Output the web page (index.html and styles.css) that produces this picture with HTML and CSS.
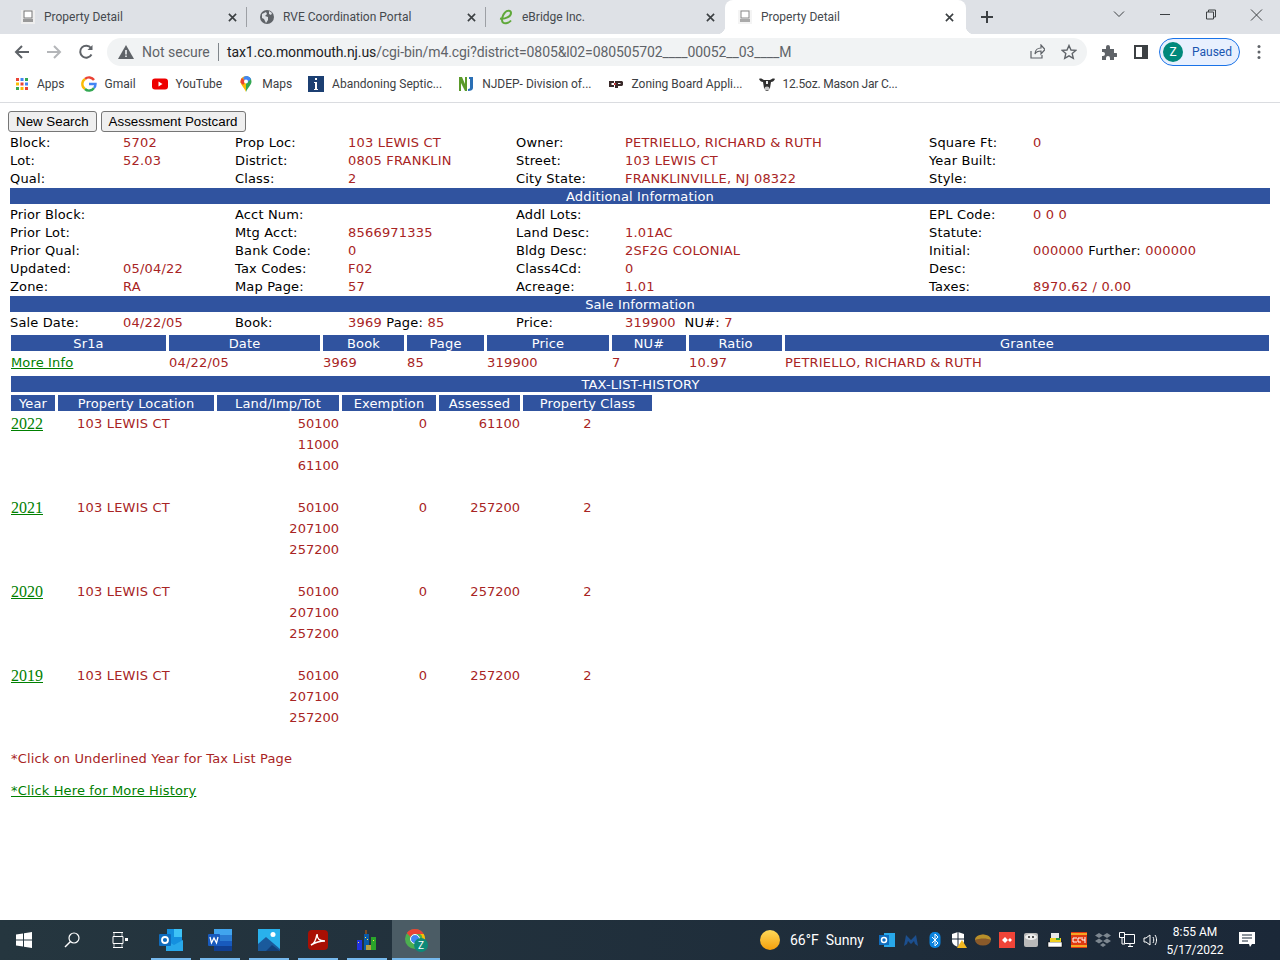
FILE: index.html

```html
<!DOCTYPE html>
<html lang="en">
<head>
    <meta charset="UTF-8">
    <title>Property Detail</title>
    <link rel="stylesheet" href="styles.css">
</head>
<body>
    <!-- browser frame -->
    <div class="tabs">
        <div class="tab">
            <svg class="favicon" viewBox="0 0 16 16"><rect x="1" y="1" width="14" height="14" fill="#eee"/><rect x="4" y="2" width="8" height="7" fill="#fff" stroke="#777"/><rect x="3" y="10" width="10" height="3" fill="#999"/></svg>
            <span class="tab-title">Property Detail</span>
            <svg class="tab-x" viewBox="0 0 10 10"><path d="M1 1l8 8M9 1l-8 8"/></svg>
        </div>
        <span class="tab-sep"></span>
        <div class="tab">
            <svg class="favicon" viewBox="0 0 16 16"><circle cx="8" cy="8" r="7" fill="#5f6368"/><path d="M3 5l4-2 1 2-2 2 3 1 0 3-2 3-2-4-2-1zM10 2l3 2-1 2-2-1z" fill="#dee1e6"/></svg>
            <span class="tab-title">RVE Coordination Portal</span>
            <svg class="tab-x" viewBox="0 0 10 10"><path d="M1 1l8 8M9 1l-8 8"/></svg>
        </div>
        <span class="tab-sep"></span>
        <div class="tab tab-last">
            <svg class="favicon" viewBox="0 0 16 16"><path d="M2 9.500c5 1 11-2 11-5.500 0-3-4-3-6-.5-3 3-4 8-2 10 2 1.500 6 .5 8-2" fill="none" stroke="#5fa83a" stroke-width="2"/></svg>
            <span class="tab-title">eBridge Inc.</span>
            <svg class="tab-x" viewBox="0 0 10 10"><path d="M1 1l8 8M9 1l-8 8"/></svg>
        </div>
        <div class="tab tab-active">
            <svg class="favicon" viewBox="0 0 16 16"><rect x="1" y="1" width="14" height="14" fill="#f4f4f4"/><rect x="4" y="2" width="8" height="7" fill="#fff" stroke="#888"/><rect x="3" y="10" width="10" height="3" fill="#aaa"/></svg>
            <span class="tab-title">Property Detail</span>
            <svg class="tab-x" viewBox="0 0 10 10"><path d="M1 1l8 8M9 1l-8 8"/></svg>
        </div>
        <svg class="new-tab" viewBox="0 0 12 12"><path d="M6 0v12M0 6h12"/></svg>
        <div class="win-btns">
            <svg class="win-btn" viewBox="0 0 46 12"><path d="M18 3l5 5 5-5"/></svg>
            <svg class="win-btn" viewBox="0 0 46 12"><path d="M18 6h10"/></svg>
            <svg class="win-btn" viewBox="0 0 46 12"><path d="M18.500 3.500h7v7h-7zM20.500 3.500v-2h7v7h-2"/></svg>
            <svg class="win-btn" viewBox="0 0 46 12"><path d="M17 1l11 11M28 1l-11 11"/></svg>
        </div>
    </div>

    <div class="toolbar">
        <svg class="tool-icon" viewBox="0 0 16 16"><path d="M15 8H2M8 2L2 8l6 6" fill="none" stroke="#5f6368" stroke-width="2"/></svg>
        <svg class="tool-icon" viewBox="0 0 16 16"><path d="M1 8h13M8 2l6 6-6 6" fill="none" stroke="#b4b6b9" stroke-width="2"/></svg>
        <svg class="tool-icon" viewBox="0 0 16 16"><path d="M13.500 10.500A6 6 0 1 1 13 4" fill="none" stroke="#5f6368" stroke-width="2"/><path d="M14.500 1v5h-5z" fill="#5f6368"/></svg>
        <div class="omnibox">
            <svg class="warn" viewBox="0 0 16 14"><path d="M8 0l8 14H0z" fill="#5f6368"/><path d="M7.200 5h1.600v4.500H7.200zM7.200 10.500h1.600V12H7.200z" fill="#f1f3f4"/></svg>
            <span class="not-secure">Not secure</span>
            <span class="omni-line"></span>
            <span class="url">tax1.co.monmouth.nj.us<span class="url-dim">/cgi-bin/m4.cgi?district=0805&amp;l02=080505702____00052__03____M</span></span>
            <svg class="omni-icon" viewBox="0 0 16 16"><path d="M2 7v7h11v-3M6 10c0-4 3-6 6-6V1l4 4.500L12 10V7c-3 0-5 1-6 3z" fill="none" stroke="#5f6368" stroke-width="1.200"/></svg>
            <svg class="omni-icon" viewBox="0 0 16 16"><path d="M8 1.500l2 4.500 4.800.4-3.600 3.200 1.100 4.700L8 11.800 3.700 14.300l1.100-4.700L1.200 6.400 6 6z" fill="none" stroke="#5f6368" stroke-width="1.400"/></svg>
        </div>
        <svg class="ext-icon" viewBox="0 0 16 16"><path d="M1 5h4V3a2 2 0 0 1 4 0v2h4v4h2a2 2 0 0 1 0 4h-2v3H9v-2a2 2 0 0 0-4 0v2H1v-4h1a2 2 0 0 0 0-4H1z" fill="#5f6368"/></svg>
        <svg class="panel-icon" viewBox="0 0 14 14"><rect x="1" y="1" width="12" height="12" fill="#fff" stroke="#3c4043" stroke-width="2"/><rect x="8" y="1" width="5" height="12" fill="#3c4043"/></svg>
        <div class="profile"><span class="avatar">Z</span><span>Paused</span></div>
        <svg class="menu-dots" viewBox="0 0 4 16"><circle cx="2" cy="2.500" r="1.500"/><circle cx="2" cy="8" r="1.500"/><circle cx="2" cy="13.500" r="1.500"/></svg>
    </div>

    <div class="bookmarks">
        <div class="mark">
            <svg class="mark-icon" viewBox="0 0 14 14"><path d="M1 1h3v3H1z" fill="#ea4335"/><path d="M5.500 1h3v3h-3z" fill="#4285f4"/><path d="M10 1h3v3h-3z" fill="#34a853"/><path d="M1 5.500h3v3H1z" fill="#fbbc04"/><path d="M5.500 5.500h3v3h-3z" fill="#ea4335"/><path d="M10 5.500h3v3h-3z" fill="#4285f4"/><path d="M1 10h3v3H1z" fill="#34a853"/><path d="M5.500 10h3v3h-3z" fill="#fbbc04"/><path d="M10 10h3v3h-3z" fill="#ea4335"/></svg>
            <span>Apps</span>
        </div>
        <div class="mark">
            <svg class="mark-icon" viewBox="0 0 16 16"><path d="M13 4a6 6 0 0 0-9-1" fill="none" stroke="#ea4335" stroke-width="2.400"/><path d="M4 3a6 6 0 0 0 0 10" fill="none" stroke="#fbbc04" stroke-width="2.400"/><path d="M4 13a6 6 0 0 0 9-1" fill="none" stroke="#34a853" stroke-width="2.400"/><path d="M13 12c1-1 1.500-2 1.500-4H8" fill="none" stroke="#4285f4" stroke-width="2.400"/></svg>
            <span>Gmail</span>
        </div>
        <div class="mark">
            <svg class="mark-icon" viewBox="0 0 16 16"><rect y="2.500" width="16" height="11" rx="3" fill="#e00"/><path d="M6.500 5.500l4 2.500-4 2.500z" fill="#fff"/></svg>
            <span>YouTube</span>
        </div>
        <div class="mark">
            <svg class="mark-icon" viewBox="0 0 16 16"><path d="M8 0a5.500 5.500 0 0 0-5.500 5.500C2.500 9 6 11 8 16z" fill="#fbbc04"/><path d="M8 0a5.500 5.500 0 0 1 5.500 5.500C13.500 9 10 11 8 16z" fill="#34a853"/><path d="M4 2l4 3.500L5 9 2.600 6.500C2.400 4.500 3 3 4 2z" fill="#ea4335"/><path d="M8 0c2.500 0 4.500 1.500 5 3L9 7 5 2c1-1.300 2-2 3-2z" fill="#4285f4"/><circle cx="8" cy="5.500" r="2" fill="#fff"/></svg>
            <span>Maps</span>
        </div>
        <div class="mark">
            <svg class="mark-icon" viewBox="0 0 16 16"><rect width="16" height="16" fill="#1c3f72"/><path d="M7 2h2v2H7zM6 6h3v7h1v1H6v-1h1V7H6z" fill="#fff"/></svg>
            <span>Abandoning Septic...</span>
        </div>
        <div class="mark">
            <svg class="mark-icon" viewBox="0 0 16 16"><path d="M1 1h3l3 7V1h2v14H7L3 7v8H1z" fill="#5b9a2a"/><path d="M11 1h4v11c0 2-2 3-5 3v-2c2 0 2-1 2-2V3h-1z" fill="#2a6fb5"/></svg>
            <span>NJDEP- Division of...</span>
        </div>
        <div class="mark">
            <svg class="mark-icon" viewBox="0 0 16 16"><path d="M1 5h5v2H3.500v2H6v2H1zM7 5h7l1 1v3l-1 1h-4v2H7zM10 7v1h2.500V7z" fill="#3a2a2a"/><path d="M6 7h2v2H6z" fill="#b33"/></svg>
            <span>Zoning Board Appli...</span>
        </div>
        <div class="mark">
            <svg class="mark-icon" viewBox="0 0 16 16"><path d="M0 3c2-1 3 0 5 1h6c2-1 3-2 5-1-1 2-2 3-4 3l-1 6-2 3H7l-2-3-1-6C2 6 1 5 0 3z" fill="#2f2f2f"/><ellipse cx="8" cy="12.500" rx="2.500" ry="2" fill="#c9c9c9"/><path d="M7 5h2v3H7z" fill="#eee"/></svg>
            <span class="mark-tight">12.5oz. Mason Jar C...</span>
        </div>
    </div>

    <!-- the page itself -->
    <div class="page">
        <div class="buttons">
            <button class="btn">New Search</button>
            <button class="btn">Assessment Postcard</button>
        </div>

        <div class="info">
            <span>Block:</span><b>5702</b><span>Prop Loc:</span><b>103 LEWIS CT</b><span>Owner:</span><b>PETRIELLO, RICHARD &amp; RUTH</b><span>Square Ft:</span><b>0</b>
            <span>Lot:</span><b>52.03</b><span>District:</span><b>0805 FRANKLIN</b><span>Street:</span><b>103 LEWIS CT</b><span>Year Built:</span><b></b>
            <span>Qual:</span><b></b><span>Class:</span><b>2</b><span>City State:</span><b>FRANKLINVILLE, NJ 08322</b><span>Style:</span><b></b>
        </div>

        <div class="bar">Additional Information</div>
        <div class="info">
            <span>Prior Block:</span><b></b><span>Acct Num:</span><b></b><span>Addl Lots:</span><b></b><span>EPL Code:</span><b>0 0 0</b>
            <span>Prior Lot:</span><b></b><span>Mtg Acct:</span><b>8566971335</b><span>Land Desc:</span><b>1.01AC</b><span>Statute:</span><b></b>
            <span>Prior Qual:</span><b></b><span>Bank Code:</span><b>0</b><span>Bldg Desc:</span><b>2SF2G COLONIAL</b><span>Initial:</span><b>000000 <i>Further:</i> 000000</b>
            <span>Updated:</span><b>05/04/22</b><span>Tax Codes:</span><b>F02</b><span>Class4Cd:</span><b>0</b><span>Desc:</span><b></b>
            <span>Zone:</span><b>RA</b><span>Map Page:</span><b>57</b><span>Acreage:</span><b>1.01</b><span>Taxes:</span><b>8970.62 / 0.00</b>
        </div>

        <div class="bar">Sale Information</div>
        <div class="info">
            <span>Sale Date:</span><b>04/22/05</b><span>Book:</span><b>3969 <i>Page:</i> 85</b><span>Price:</span><b>319900 &nbsp;<i>NU#:</i> 7</b><span></span><b></b>
        </div>

        <div class="sales">
            <div class="head">Sr1a</div><div class="head">Date</div><div class="head">Book</div><div class="head">Page</div><div class="head">Price</div><div class="head">NU#</div><div class="head">Ratio</div><div class="head">Grantee</div>
            <a class="link" href="#">More Info</a><b>04/22/05</b><b>3969</b><b>85</b><b>319900</b><b>7</b><b>10.97</b><b>PETRIELLO, RICHARD &amp; RUTH</b>
        </div>

        <div class="bar bar-tax">TAX-LIST-HISTORY</div>
        <div class="history">
            <div class="head">Year</div><div class="head">Property Location</div><div class="head">Land/Imp/Tot</div><div class="head">Exemption</div><div class="head">Assessed</div><div class="head">Property Class</div>

            <a class="year" href="#">2022</a><b class="loc">103 LEWIS CT</b><b class="num">50100<br>11000<br>61100</b><b class="num ex">0</b><b class="num">61100</b><b class="cls">2</b>
            <a class="year" href="#">2021</a><b class="loc">103 LEWIS CT</b><b class="num">50100<br>207100<br>257200</b><b class="num ex">0</b><b class="num">257200</b><b class="cls">2</b>
            <a class="year" href="#">2020</a><b class="loc">103 LEWIS CT</b><b class="num">50100<br>207100<br>257200</b><b class="num ex">0</b><b class="num">257200</b><b class="cls">2</b>
            <a class="year" href="#">2019</a><b class="loc">103 LEWIS CT</b><b class="num">50100<br>207100<br>257200</b><b class="num ex">0</b><b class="num">257200</b><b class="cls">2</b>
        </div>

        <p class="note">*Click on Underlined Year for Tax List Page</p>
        <a class="link more" href="#">*Click Here for More History</a>
    </div>

    <!-- windows taskbar -->
    <div class="taskbar">
        <div class="task">
            <svg class="task-icon" viewBox="0 0 16 16"><path d="M0 2.500l7-1v6H0zM8 1.300L16 0v7.500H8zM0 8.500h7v6l-7-1zM8 8.500h8V16l-8-1.300z" fill="#fff"/></svg>
        </div>
        <div class="task">
            <svg class="task-icon" viewBox="0 0 16 16"><circle cx="10" cy="6" r="5" fill="none" stroke="#fff" stroke-width="1.200"/><path d="M6.500 9.500L1 15" stroke="#fff" stroke-width="1.400"/></svg>
        </div>
        <div class="task">
            <svg class="task-icon" viewBox="0 0 16 16"><path d="M1 .500h10M1 15.500h10M1 4.500h10v7H1z" fill="none" stroke="#fff"/><rect x="13" y="6" width="3" height="3" fill="#fff"/><path d="M2 1v3M10 1v3M2 12v3M10 12v3" stroke="#fff" stroke-width=".7"/></svg>
        </div>
        <div class="app">
            <svg class="app-icon" viewBox="0 0 24 24"><rect x="8" y="1" width="15" height="16" fill="#1490df"/><rect x="15" y="1" width="8" height="8" fill="#50d9ff" opacity=".7"/><path d="M7 12l8 5 9-5v11H7z" fill="#28a8ea"/><rect y="6" width="12" height="12" rx="1" fill="#0f6cbd"/><circle cx="6" cy="12" r="3" fill="none" stroke="#fff" stroke-width="1.800"/></svg>
        </div>
        <div class="app">
            <svg class="app-icon" viewBox="0 0 24 24"><rect x="6" y="1" width="18" height="22" rx="1" fill="#2b7cd3"/><rect x="6" y="1" width="18" height="6" fill="#41a5ee"/><rect x="6" y="13" width="18" height="5" fill="#185abd"/><rect x="6" y="18" width="18" height="5" fill="#103f91"/><rect y="6" width="12" height="12" rx="1" fill="#185abd"/><path d="M2 9l1.500 6 2.500-5 2.500 5L10 9" fill="none" stroke="#fff" stroke-width="1.300"/></svg>
        </div>
        <div class="app">
            <svg class="app-icon" viewBox="0 0 24 24"><rect x="1" y="1" width="22" height="22" fill="#29b1ec"/><path d="M1 23v-7l8-7 14 12v2z" fill="#1a5a9c"/><path d="M9 23l6-6 8 6z" fill="#123f78"/><circle cx="16" cy="6.500" r="2.500" fill="#fff"/></svg>
        </div>
        <div class="app">
            <svg class="app-icon" viewBox="0 0 24 24"><rect x="2" y="2" width="20" height="20" rx="4" fill="#a90f04"/><path d="M5 17c3-1 5-5 6-11 0 5 2 7 8 7-5 0-9 1-14 4z" fill="none" stroke="#fff" stroke-width="1.500"/></svg>
        </div>
        <div class="app">
            <svg class="app-icon" viewBox="0 0 24 24"><rect x="2" y="12" width="5" height="10" fill="#2233dd"/><rect x="9" y="6" width="5" height="16" fill="#0a5aa8"/><rect x="16" y="9" width="5" height="13" fill="#2aa52a"/><path d="M10 2h2v4h-2z" fill="#7a4a20"/><path d="M11 17h5v5h-5z" fill="#b8a040"/><path d="M10 9h1v1h-1zM12 11h1v1h-1zM3 14h1v1H3zM18 12h1v1h-1z" fill="#ffe840"/></svg>
        </div>
        <div class="app app-active">
            <svg class="app-icon" viewBox="0 0 24 24"><circle cx="11" cy="11" r="10" fill="#4caf50"/><path d="M11 1a10 10 0 0 1 8.700 5H11a5 5 0 0 0-4.500 3L2.800 5A10 10 0 0 1 11 1z" fill="#ea4335"/><path d="M19.700 6a10 10 0 0 1-7 15l4-7a5 5 0 0 0-.7-8z" fill="#fbbc04"/><circle cx="11" cy="11" r="4.500" fill="#4285f4" stroke="#fff"/><circle cx="17" cy="17" r="7" fill="#0d8a78"/><text class="chrome-z" x="17" y="21">Z</text></svg>
        </div>

        <div class="tray">
            <span class="sun"></span>
            <span class="weather">66°F &nbsp;Sunny</span>
            <div class="tray-icons">
                <svg class="tray-icon" viewBox="0 0 16 16"><rect x="5" y="1" width="11" height="14" fill="#28a8ea"/><rect y="3" width="10" height="10" fill="#0f6cbd"/><circle cx="5" cy="8" r="2.500" fill="none" stroke="#fff" stroke-width="1.500"/></svg>
                <svg class="tray-icon" viewBox="0 0 16 16"><path d="M1 14L3 3l5 5 5-5 2 11-3-2-1-3-3 3-3-3-1 3z" fill="#1c4f8f"/></svg>
                <svg class="tray-icon" viewBox="0 0 16 16"><rect x="2.500" width="11" height="16" rx="5" fill="#0a84e0"/><path d="M5 5l6 6-3 3V2l3 3-6 6" fill="none" stroke="#fff"/></svg>
                <svg class="tray-icon" viewBox="0 0 16 16"><path d="M1 2l6-2 6 2v7c0 3-3 5-6 6-3-1-6-3-6-6z" fill="#fff"/><path d="M7 0v15M1 7h12" stroke="#1b2838"/><path d="M11 8l5 8H6z" fill="#f5b921"/></svg>
                <svg class="tray-icon" viewBox="0 0 16 16"><ellipse cx="8" cy="8" rx="8" ry="5.500" fill="#8a5a2a"/><path d="M0 8a8 5.500 0 0 1 16 0c-4-2-11-2-16 0z" fill="#b8902a"/></svg>
                <svg class="tray-icon" viewBox="0 0 16 16"><rect width="16" height="16" fill="#f04438"/><path d="M3 8l3-3 3 3-3 3zM9 8l2-2 2 2-2 2z" fill="#fff"/></svg>
                <svg class="tray-icon" viewBox="0 0 16 16"><rect x="1" y="1" width="14" height="14" rx="2" fill="#b9b9b9"/><ellipse cx="8" cy="5" rx="6" ry="3" fill="#eee"/><path d="M5 4h2v2H5zM9 4h2v2H9z" fill="#555"/></svg>
                <svg class="tray-icon" viewBox="0 0 16 16"><rect x="1" y="10" width="14" height="5" fill="#fff" stroke="#000" stroke-width=".5"/><rect x="4" y="1" width="8" height="5" fill="#e8e8e8"/><rect x="3" y="6" width="11" height="4" fill="#f0d020"/><rect x="9" y="6" width="4" height="2" fill="#30a040"/></svg>
                <svg class="tray-icon" viewBox="0 0 16 16"><rect width="16" height="16" fill="#e03a10"/><rect y="1" width="16" height="2" fill="#f5a623"/><rect y="13" width="16" height="2" fill="#f5a623"/><path d="M6 6H2v4h4M10 6H7v4h3M11 5v3h3m0-3v6" fill="none" stroke="#fff"/></svg>
                <svg class="tray-icon" viewBox="0 0 16 16"><path d="M4 1l4 2.500L4 6 0 3.500zM12 1l4 2.500L12 6 8 3.500zM4 6.500L8 9 4 11.500 0 9zM12 6.500L16 9l-4 2.500L8 9zM8 11l3 2-3 2-3-2z" fill="#7d8790"/></svg>
                <svg class="tray-icon" viewBox="0 0 16 16"><path d="M5.500 2.500h10v9h-10zM9 14.500h5M11 12v2M.5.500h5v5h-5zM3 6v6h3" fill="#1b2838" stroke="#fff"/></svg>
                <svg class="tray-icon" viewBox="0 0 16 16"><path d="M1 6v4h2l4 3V3L3 6zM10 5c1 2 1 4 0 6M12 3c2 3 2 7 0 10" fill="none" stroke="#fff"/></svg>
            </div>
            <div class="clock"><span>8:55 AM</span><span>5/17/2022</span></div>
            <svg class="notify" viewBox="0 0 16 16"><path d="M0 0h16v12h-3l-2 3-1-3H0z" fill="#fff"/><path d="M3 3h10M3 6h10M3 9h6" stroke="#1b2838"/></svg>
        </div>
    </div>
</body>
</html>
```

FILE: styles.css

```css
* {
    box-sizing: border-box;
}
html, body {
    margin: 0;
    height: 100%;
}
body {
    display: flex;
    flex-direction: column;
    height: 960px;
    overflow: hidden;
    background-color: white;
    font-family: "DejaVu Sans", Verdana, sans-serif;
}

/* tabs */
.tabs {
    display: flex;
    align-items: center;
    height: 34px;
    padding-left: 8px;
    background-color: #dee1e6;
    font-family: Roboto, "Open Sans", sans-serif;
    font-size: 12px;
    color: #45494e;
}
.tab {
    display: flex;
    align-items: center;
    width: 238px;
    height: 34px;
    padding: 0 9px 0 12px;
}
.tab-last {
    width: 239px;
    padding-right: 10px;
}
.tab-sep {
    width: 1px;
    height: 20px;
    background-color: #9da0a5;
}
.tab-active {
    position: relative;
    width: 241px;
    padding-left: 12px;
    padding-right: 12px;
    border-radius: 8px 8px 0 0;
    background-color: white;
}
/* flared bottom corners of the active tab */
.tab-active::before,
.tab-active::after {
    content: "";
    position: absolute;
    bottom: 0;
    width: 8px;
    height: 8px;
}
.tab-active::before {
    left: -8px;
    background: radial-gradient(circle at 0 0, #dee1e6 8px, white 8.5px);
}
.tab-active::after {
    right: -8px;
    background: radial-gradient(circle at 100% 0, #dee1e6 8px, white 8.5px);
}
.favicon {
    width: 16px;
    height: 16px;
    margin-right: 8px;
}
.tab-title {
    flex: 1;
    white-space: nowrap;
}
.tab-x {
    width: 9px;
    height: 9px;
    fill: none;
    stroke: #3c4043;
    stroke-width: 1.800;
}
.new-tab {
    width: 12px;
    height: 12px;
    margin-left: 15px;
    fill: none;
    stroke: #3c4043;
    stroke-width: 2;
}
.win-btns {
    display: flex;
    margin-left: auto;
    padding-bottom: 6px;
}
.win-btn {
    width: 46px;
    height: 13px;
    fill: none;
    stroke: #3c4043;
}

/* toolbar */
.toolbar {
    display: flex;
    align-items: center;
    height: 38px;
    padding: 0 0 2px 14px;
    background-color: white;
    font-family: Roboto, "Open Sans", sans-serif;
}
.tool-icon {
    width: 16px;
    height: 16px;
    margin-right: 16px;
}
.omnibox {
    display: flex;
    align-items: center;
    width: 980px;
    height: 28px;
    margin-left: -3px;
    padding: 0 10px 0 11px;
    border-radius: 14px;
    background-color: #f1f3f4;
}
.warn {
    width: 16px;
    height: 14px;
    margin-right: 8px;
}
.not-secure {
    width: 68px;
    font-size: 14px;
    color: #5f6368;
    white-space: nowrap;
}
.omni-line {
    width: 1px;
    height: 18px;
    margin: 0 8px;
    background-color: #80868b;
}
.url {
    flex: 1;
    font-size: 14px;
    letter-spacing: -.1px;
    color: #202124;
    white-space: nowrap;
}
.url-dim {
    color: #5f6368;
}
.omni-icon {
    width: 16px;
    height: 16px;
    margin-left: 16px;
}
.ext-icon {
    width: 16px;
    height: 16px;
    margin-left: 14px;
}
.panel-icon {
    width: 14px;
    height: 14px;
    margin-left: 17px;
}
.profile {
    display: flex;
    align-items: center;
    width: 81px;
    height: 28px;
    margin-left: 11px;
    padding-left: 3px;
    border: 1px solid #1a73e8;
    border-radius: 14px;
    background-color: #e8f0fe;
    font-size: 12px;
    color: #1a56b0;
}
.avatar {
    width: 20px;
    height: 20px;
    margin-right: 9px;
    border-radius: 50%;
    background-color: #00897b;
    color: white;
    text-align: center;
    line-height: 20px;
}
.menu-dots {
    width: 4px;
    height: 16px;
    margin-left: 17px;
    fill: #5f6368;
}

/* bookmarks */
.bookmarks {
    display: flex;
    align-items: center;
    gap: 16px;
    height: 31px;
    padding: 0 0 6px 15px;
    border-bottom: 1px solid #dadce0;
    background-color: white;
    font-family: Roboto, "Open Sans", sans-serif;
    font-size: 12px;
    color: #3c4043;
}
.mark {
    display: flex;
    align-items: center;
    gap: 8px;
    white-space: nowrap;
}
.mark-icon {
    width: 16px;
    height: 16px;
}
.mark:first-child .mark-icon {
    width: 14px;
    height: 14px;
}
.mark-tight {
    letter-spacing: -.2px;
}

/* page */
.page {
    flex: 1;
    padding: 8px 10px 0;
    font-size: 13px;
    letter-spacing: .15px;
    color: black;
}
.buttons {
    display: flex;
    gap: 4px;
    margin-left: -2px;
}
.btn {
    height: 21px;
    padding: 0 7px;
    border: 1px solid #767676;
    border-radius: 3px;
    background-color: #efefef;
    font-family: "Liberation Sans", Arial, sans-serif;
    font-size: 13.333px;
    letter-spacing: 0;
    color: black;
}
.info {
    display: grid;
    grid-template-columns: 113px 112px 113px 168px 109px 304px 104px 1fr;
    grid-auto-rows: 18px;
    margin-top: 2px;
    line-height: 18px;
    white-space: nowrap;
}
b {
    font-weight: normal;
    letter-spacing: .2px;
    color: #a82424;
}
b i {
    font-style: normal;
    color: black;
}
.bar {
    height: 16px;
    background-color: #30539f;
    color: white;
    text-align: center;
    line-height: 18px;
}
.head {
    height: 16px;
    background-color: #30539f;
    color: white;
    text-align: center;
    line-height: 18px;
    white-space: nowrap;
}
.sales {
    display: grid;
    grid-template-columns: 155px 151px 81px 77px 122px 74px 93px 1fr;
    column-gap: 3px;
    margin: 3px 1px 0;
    line-height: 24px;
}
.link {
    color: green;
}
.bar-tax {
    margin: 1px 0 0 1px;
}
.history {
    display: grid;
    grid-template-columns: 44px 156px 122px 94px 81px 129px;
    grid-auto-rows: 84px;
    grid-template-rows: 18px;
    column-gap: 3px;
    margin: 3px 0 0 1px;
    line-height: 21px;
}
.history .head {
    margin-bottom: 2px;
    line-height: 18px;
}
.year {
    font-family: "Liberation Serif", "Times New Roman", serif;
    font-size: 16px;
    letter-spacing: 0;
    color: green;
}
.loc {
    padding-left: 19px;
}
.num {
    letter-spacing: 0;
    text-align: right;
}
.ex {
    padding-right: 9px;
}
.cls {
    text-align: center;
}
.note {
    margin: 1px 0 14px 1px;
    line-height: 18px;
    color: #a82424;
}
.more {
    display: block;
    width: fit-content;
    margin-left: 1px;
    line-height: 18px;
}

/* taskbar */
.taskbar {
    display: flex;
    align-items: stretch;
    height: 40px;
    background: linear-gradient(to right, #25363f, #1b2838);
    color: white;
    font-family: Roboto, "Open Sans", sans-serif;
    font-size: 12px;
}
.task {
    display: flex;
    align-items: center;
    justify-content: center;
    width: 48px;
}
.task-icon {
    width: 16px;
    height: 16px;
}
.task:nth-child(3) {
    margin-right: 3px;
}
.app {
    display: flex;
    align-items: center;
    justify-content: center;
    width: 40px;
    margin: 0 5px 0 4px;
    box-shadow: inset 0 -2px 0 #76b9ed;
}
.app-icon {
    width: 24px;
    height: 24px;
}
.app-active {
    width: 48px;
    margin: 0;
    background-color: #4b5c65;
}
.chrome-z {
    fill: white;
    font-size: 10px;
    text-anchor: middle;
}
.tray {
    display: flex;
    align-items: center;
    margin-left: auto;
    height: 40px;
}
.sun {
    width: 20px;
    height: 20px;
    margin-right: 10px;
    border-radius: 50%;
    background: linear-gradient(#ffd95a, #f59f0b);
}
.weather {
    width: 85px;
    font-size: 14px;
    white-space: nowrap;
}
.tray-icons {
    display: flex;
}
.tray-icon {
    width: 16px;
    height: 16px;
    margin: 0 4px;
}
.clock {
    display: flex;
    flex-direction: column;
    align-items: center;
    width: 64px;
    padding-top: 2px;
    line-height: 18px;
}
.notify {
    width: 16px;
    height: 16px;
    margin: 0 25px 0 12px;
}
```
